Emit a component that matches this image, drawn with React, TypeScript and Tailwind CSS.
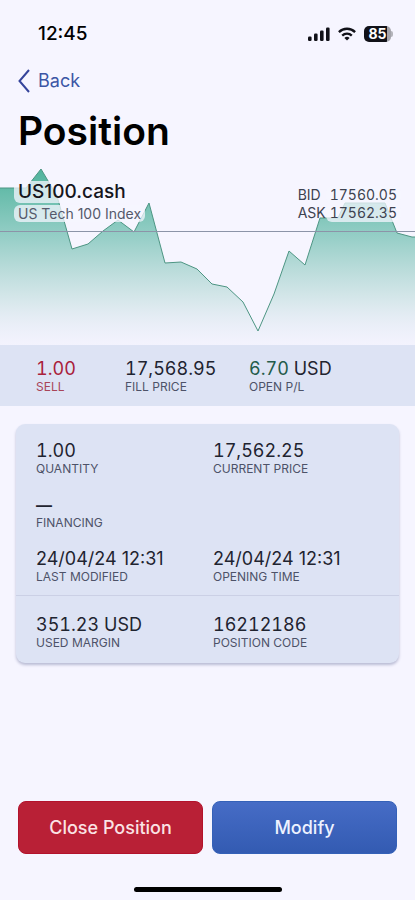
import type { ReactNode } from "react";

type FieldProps = { value: ReactNode; label: string; tone?: string; labelTone?: string; figures?: string };

function Field({
  value,
  label,
  tone = "text-[#1f2430]",
  labelTone = "text-[#4d5268]",
  figures = "tabular-nums",
}: FieldProps) {
  return (
    <div className="flex flex-col">
      <dd className={`order-1 text-lg leading-5 whitespace-nowrap ${figures} ${tone}`}>{value}</dd>
      <dt className={`order-2 text-xs leading-4 whitespace-nowrap ${labelTone}`}>{label}</dt>
    </div>
  );
}

function StatusBar() {
  return (
    <div className="flex h-[67px] items-center justify-between pr-[22px] pl-[38px]">
      <span className="text-[19px] leading-6 font-medium text-black">12:45</span>
      <div className="flex items-center gap-2 text-[#111118]">
        <svg width="22" height="14" viewBox="0 0 22 14" fill="currentColor" aria-hidden="true">
          <rect x="0" y="9.5" width="3.6" height="4.5" rx="1.2" />
          <rect x="6" y="6.5" width="3.6" height="7.5" rx="1.2" />
          <rect x="12" y="3.5" width="3.6" height="10.5" rx="1.2" />
          <rect x="18" y="0.5" width="3.6" height="13.5" rx="1.2" />
        </svg>
        <svg width="18" height="14" viewBox="0 0 18 14" fill="none" stroke="currentColor" strokeWidth="2.3" aria-hidden="true">
          <path d="M.9 5.1a11.5 11.5 0 0 1 16.2 0" />
          <path d="M4.2 8.6a6.9 6.9 0 0 1 9.6 0" />
          <path d="M9 13.6 6.4 11a3.7 3.7 0 0 1 5.2 0Z" fill="currentColor" stroke="none" />
        </svg>
        <div className="flex items-center">
          <span className="flex h-4 w-[27px] items-center justify-center rounded-[5px] bg-linear-to-r from-[#111118] from-85% to-[#a3a3aa] to-85% text-sm leading-4 font-bold text-white">
            85
          </span>
          <span className="h-1.5 w-0.5 rounded-r-full bg-[#b4b4bb]" />
        </div>
      </div>
    </div>
  );
}

const line =
  "M0 28H26L41 9L57 36L72 89L88 84L103 71L118 60L134 72L149 43L165 103L181 102L197 109L212 124L227 127L243 142L258 171L274 134L289 91L305 105L320 58H338L345 43H385L397 73L412 77H415";

function Chart() {
  return (
    <section className="relative h-[185px]">
      <svg className="block h-full w-full" viewBox="0 0 415 185" preserveAspectRatio="none" aria-hidden="true">
        <defs>
          <linearGradient id="area" x1="0" y1="9" x2="0" y2="185" gradientUnits="userSpaceOnUse">
            <stop offset="0" stopColor="#4fb39c" />
            <stop offset="0.4" stopColor="#52b39f" stopOpacity="0.57" />
            <stop offset="0.75" stopColor="#6bb8a6" stopOpacity="0.22" />
            <stop offset="1" stopColor="#b9c9e0" stopOpacity="0.05" />
          </linearGradient>
        </defs>
        <path d={`${line}V185H0Z`} fill="url(#area)" />
        <path d={line} fill="none" stroke="#4d9583" />
        <path d="M0 71.5H415" stroke="#8c94a8" />
      </svg>
      <div className="absolute top-[21px] left-[14px] flex flex-col items-start gap-0.5">
        <h2 className="rounded-md bg-[#f6f5ff]/75 px-1 text-[19px] leading-[22px] font-medium text-[#15151c]">US100.cash</h2>
        <p className="rounded-md bg-[#f6f5ff]/75 px-1 text-sm leading-[17px] text-[#55596b]">US Tech 100 Index</p>
      </div>
      <dl className="absolute top-[26px] right-[14px] grid grid-cols-[auto_auto] text-sm leading-[18px] text-[#3d4250] tabular-nums">
        <dt>BID</dt>
        <dd className="rounded-md bg-[#f6f5ff]/75 px-1 text-right">17560.05</dd>
        <dt>ASK</dt>
        <dd className="rounded-md bg-[#f6f5ff]/75 px-1 text-right">17562.35</dd>
      </dl>
    </section>
  );
}

export default function App() {
  return (
    <main className="flex min-h-screen flex-col bg-[#f6f5ff] font-['Inter','Liberation_Sans',sans-serif]">
      <StatusBar />
      <header className="flex flex-col px-[18px]">
        <a href="#back" className="flex h-7 items-center gap-2 self-start text-lg text-[#3c55a5]">
          <svg width="12" height="24" viewBox="0 0 12 24" fill="none" stroke="#35449b" strokeWidth="2" aria-hidden="true">
            <path d="M11 1 1.5 12 11 23" />
          </svg>
          Back
        </a>
        <h1 className="mt-[14px] mb-[7px] text-[39px] leading-11 font-semibold text-black">Position</h1>
      </header>
      <Chart />
      <dl className="flex bg-[#dde3f4] pt-[14px] pb-[11px] pl-9">
        <div className="w-[89px]">
          <Field value="1.00" label="SELL" tone="text-[#a9213b]" labelTone="text-[#a84558]" />
        </div>
        <div className="w-[124px]">
          <Field value="17,568.95" label="FILL PRICE" />
        </div>
        <Field value={<><span className="text-[#245c4a]">6.70</span> USD</>} label="OPEN P/L" />
      </dl>
      <section className="mx-4 mt-[18px] rounded-[9px] bg-[#dde3f4] shadow-[0_2px_3px_#b9bbd4]">
        <dl className="grid grid-cols-[177px_1fr] gap-y-[18px] border-b border-[#cbd0e5] px-5 pt-[17px] pb-[10px]">
          <Field value="1.00" label="QUANTITY" />
          <Field value="17,562.25" label="CURRENT PRICE" />
          <div className="col-span-2">
            <Field value={<span className="text-base leading-5 font-semibold">—</span>} label="FINANCING" />
          </div>
          <Field value="24/04/24 12:31" label="LAST MODIFIED" figures="proportional-nums" />
          <Field value="24/04/24 12:31" label="OPENING TIME" figures="proportional-nums" />
        </dl>
        <dl className="grid grid-cols-[177px_1fr] px-5 pt-[19px] pb-3">
          <Field value="351.23 USD" label="USED MARGIN" />
          <Field value="16212186" label="POSITION CODE" />
        </dl>
      </section>
      <footer className="mt-auto flex flex-col items-center px-[18px] pb-2">
        <div className="grid w-full grid-cols-2 gap-[9px]">
          <button type="button" className="h-[53px] rounded-lg border border-[#b3122c] bg-[#b92036] text-lg font-medium text-[#fbe3e5]">
            Close Position
          </button>
          <button type="button" className="h-[53px] rounded-lg border border-[#3461b8] bg-linear-to-b from-[#466cc6] to-[#335bb2] text-lg font-medium text-[#edf2ff]">
            Modify
          </button>
        </div>
        <div className="mt-[33px] h-[5px] w-[148px] rounded-full bg-black" />
      </footer>
    </main>
  );
}
